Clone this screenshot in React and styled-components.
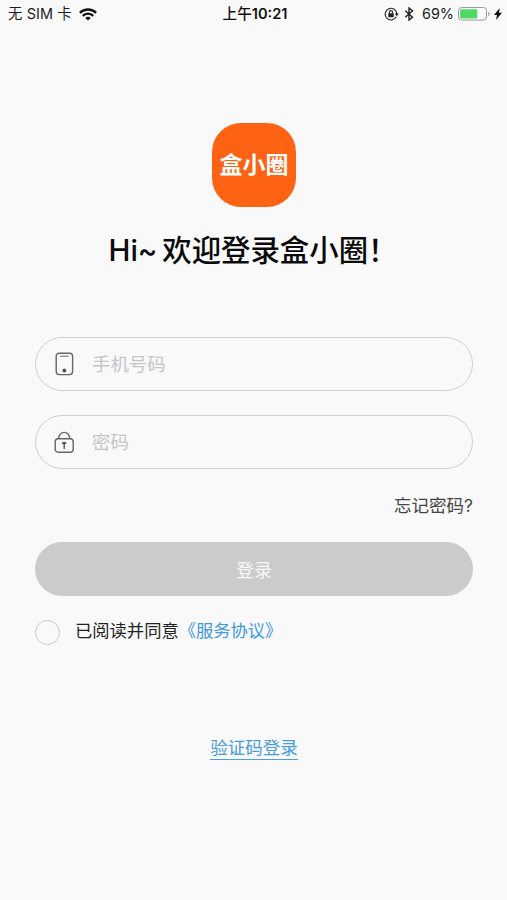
import React from 'react'
import styled, {createGlobalStyle} from 'styled-components'

const GlobalStyle = createGlobalStyle`
  * {
    box-sizing: border-box;
  }
  body {
    margin: 0;
    background: #f9f9f9;
    font-family: Inter, 'Noto Sans CJK SC', sans-serif;
  }
`

const Screen = styled.div`
  display: flex;
  flex-direction: column;
  height: 900px;
  background: #f9f9f9;
  overflow: hidden;
`

const StatusBar = styled.header`
  display: grid;
  grid-template-columns: 1fr auto 1fr;
  align-items: center;
  height: 28px;
  padding: 0 5px 0 8px;
  color: #1c1c1c;
  font-size: 14px;
  line-height: 28px;
  white-space: pre;
`

const StatusGroup = styled.div`
  display: flex;
  align-items: center;
  justify-content: ${props => props.$align || 'flex-start'};
  gap: ${props => props.$gap || 0}px;
`

const Carrier = styled.span`
  font-size: 14.4px;
  letter-spacing: 0.1px;
`

const Percent = styled.span`
  margin-left: 4px;
  font-size: 14.4px;
`

const Time = styled.div`
  color: #111;
  font-size: 14.6px;
  font-weight: 500;
  b {
    font-weight: 600;
  }
`

const Content = styled.main`
  display: flex;
  flex-direction: column;
  align-items: center;
  padding: 95px 34px 0 35px;
`

const Logo = styled.div`
  display: flex;
  align-items: center;
  justify-content: center;
  width: 84px;
  height: 84px;
  border-radius: 29px;
  background: #fe6213;
  color: #fff;
  font-size: 23px;
  font-weight: 700;
  line-height: 85px;
`

const Title = styled.h1`
  margin: 21px 0 0;
  height: 46px;
  padding-right: 2px;
  color: #0b0b0b;
  font-size: 29.4px;
  font-weight: 500;
  line-height: 46px;
  white-space: nowrap;
  word-spacing: -3px;
`

const Form = styled.form`
  display: flex;
  flex-direction: column;
  width: 100%;
  margin-top: 63px;
`

const Field = styled.label`
  display: flex;
  align-items: center;
  height: 54px;
  margin-bottom: 24px;
  padding-left: 18px;
  border: 1px solid #d0d0d0;
  border-radius: 27px;
`

const Input = styled.input`
  flex: 1;
  min-width: 0;
  height: 50px;
  margin-left: 18px;
  padding: 0;
  border: 0;
  outline: 0;
  background: none;
  font-family: inherit;
  font-size: 18.4px;
  &::placeholder {
    color: #c5c5c9;
    opacity: 1;
  }
`

const Forgot = styled.a`
  align-self: flex-end;
  color: #444;
  font-size: 17.5px;
  line-height: 26px;
`

const Submit = styled.button`
  height: 54px;
  margin-top: 23px;
  padding: 0;
  border: 0;
  border-radius: 27px;
  background: #cbcbcb;
  color: #f6f6f6;
  font-family: inherit;
  font-size: 18px;
`

const Agreement = styled.div`
  display: flex;
  align-items: flex-start;
  height: 27px;
  margin-top: 22px;
  color: #222;
  font-size: 17.3px;
  line-height: 26px;
`

const Radio = styled.span`
  width: 25px;
  height: 25px;
  margin: 2px 15px 0 0;
  border: 1px solid #cbcbcb;
  border-radius: 50%;
`

const Terms = styled.a`
  color: #3f9ae2;
`

const CodeLogin = styled.a`
  height: 25px;
  margin-top: 90px;
  border-bottom: 1px solid #4a9fdd;
  color: #469ddd;
  font-size: 17.5px;
  line-height: 25px;
`

const WifiIcon = () => (
  <svg width="18" height="13" viewBox="0 0 18 13" fill="none" stroke="#111" strokeWidth="2.3">
    <path d="M.9 4.9a11.4 11.4 0 0 1 16.2 0" />
    <path d="M3.8 7.9a7.3 7.3 0 0 1 10.4 0" />
    <path d="M9 12.6 6.2 9.9a4.2 4.2 0 0 1 5.6 0z" fill="#111" stroke="none" />
  </svg>
)

const RotationLockIcon = () => (
  <svg width="15" height="14" viewBox="0 0 15 14" fill="none" stroke="#222" strokeWidth="1.1">
    <path d="M12.2 9.7A5.8 5.8 0 1 1 12.8 7" />
    <path d="M10.8 6.6h4l-2 2.6z" fill="#222" stroke="none" />
    <rect x="4.3" y="6.2" width="5.4" height="4" rx=".5" fill="#222" stroke="none" />
    <path d="M5.4 6.4V5.2a1.6 1.6 0 0 1 3.2 0v1.2" />
  </svg>
)

const BluetoothIcon = () => (
  <svg width="11" height="14" viewBox="-1.5 0 11 14" fill="none" stroke="#222" strokeWidth="1.4">
    <path d="M.8 3.8 8 10.2 4.5 13V1L8 3.8.8 10.2" />
  </svg>
)

const BatteryIcon = () => (
  <svg width="32" height="14" viewBox="0 0 32 14">
    <rect x=".5" y=".5" width="28" height="12.6" rx="3" fill="none" stroke="#9b9b9b" />
    <rect x="2.2" y="2.2" width="17" height="9.3" rx="1" fill="#4cd964" />
    <path d="M30 4.8q1.6.5 1.6 2.1T30 9z" fill="#a5a5a5" />
  </svg>
)

const ChargingIcon = () => (
  <svg width="8" height="12" viewBox="0 0 8 12">
    <path d="M5.8 0 0 6.9h3L2 12 8 4.8H4.9z" fill="#111" />
  </svg>
)

const PhoneIcon = () => (
  <svg width="20" height="24" viewBox="0 0 20 24" fill="none" stroke="#666" strokeWidth="1.4">
    <rect x="2.2" y="1.2" width="16.4" height="21.4" rx="3" />
    <path d="M6 4.2h8.8" strokeWidth="1" />
    <circle cx="10.4" cy="18.5" r="1.9" fill="#555" stroke="none" />
  </svg>
)

const LockIcon = () => (
  <svg width="20" height="24" viewBox="0 0 20 24" fill="none" stroke="#666" strokeWidth="1.4">
    <rect x="1.2" y="8.8" width="18" height="13.4" rx="3" />
    <path d="M4.5 8.6C5.1 4.7 7.1 2.4 10.2 2.4s5.1 2.3 5.7 6.2" />
    <path d="M10.2 12v7" strokeWidth="1.6" />
    <path d="M7.8 14q0-2.2 2.4-2.2t2.4 2.2z" fill="#555" stroke="none" />
  </svg>
)

export default function App() {
  return (
    <Screen>
      <GlobalStyle />
      <StatusBar>
        <StatusGroup $gap={7}>
          <Carrier>无 SIM 卡</Carrier>
          <WifiIcon />
        </StatusGroup>
        <Time>
          上午<b>10:21</b>
        </Time>
        <StatusGroup $align="flex-end" $gap={4}>
          <RotationLockIcon />
          <BluetoothIcon />
          <Percent>69%</Percent>
          <BatteryIcon />
          <ChargingIcon />
        </StatusGroup>
      </StatusBar>
      <Content>
        <Logo>盒小圈</Logo>
        <Title>Hi~ 欢迎登录盒小圈！</Title>
        <Form onSubmit={e => e.preventDefault()}>
          <Field>
            <PhoneIcon />
            <Input type="tel" placeholder="手机号码" />
          </Field>
          <Field>
            <LockIcon />
            <Input type="password" placeholder="密码" />
          </Field>
          <Forgot>忘记密码?</Forgot>
          <Submit type="submit">登录</Submit>
          <Agreement>
            <Radio />
            <span>已阅读并同意</span>
            <Terms>《服务协议》</Terms>
          </Agreement>
        </Form>
        <CodeLogin>验证码登录</CodeLogin>
      </Content>
    </Screen>
  )
}
